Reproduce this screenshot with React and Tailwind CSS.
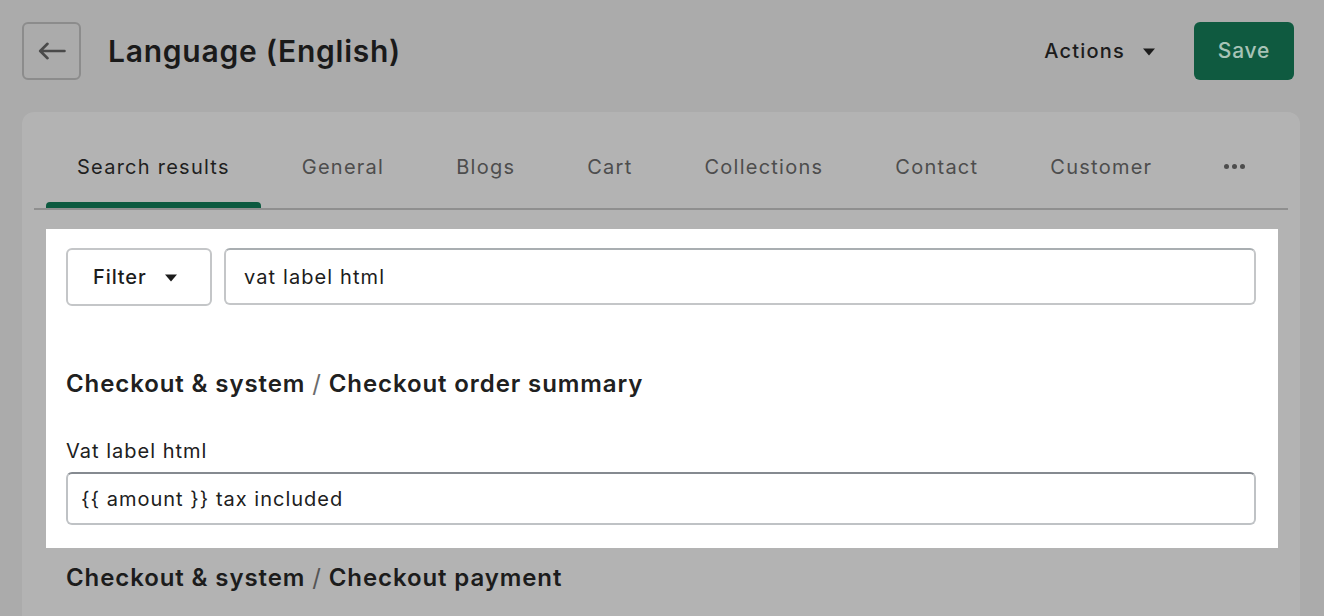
const tabs = ['Search results', 'General', 'Blogs', 'Cart', 'Collections', 'Contact', 'Customer']

/** 작은 아래쪽 삼각형 */
function Caret({ className = '' }) {
  return (
    <svg className={className} width="14" height="8" viewBox="0 0 14 8">
      <path d="M1 0.5h12L7 7.5z" fill="currentColor" />
    </svg>
  )
}

export default function App() {
  return (
    <div className="min-h-[616px] h-[616px] overflow-hidden bg-[#ababab] font-['Inter','Liberation_Sans',sans-serif] text-[#1c1c1c]">
      {/* 상단 헤더 */}
      <header className="flex items-center pl-[22px] pr-[30px] pt-[22px] h-[80px]">
        <button className="w-[59px] h-[58px] rounded-[6px] border-2 border-[#8c8c8c] flex items-center justify-center text-[#4a4a4a]">
          <svg width="28" height="18" viewBox="0 0 28 18" fill="none" stroke="currentColor" strokeWidth="2.6" strokeLinecap="round" strokeLinejoin="round">
            <path d="M26.5 9H2.5M9.5 1.8L2.2 9l7.3 7.2" />
          </svg>
        </button>
        <h1 className="ml-[27px] text-[30px] font-semibold tracking-[0.75px] text-[#1a1a1a]">Language (English)</h1>
        <div className="ml-auto flex items-center">
          <button className="flex items-center gap-[17px] text-[20px] font-medium tracking-[1.2px] text-[#1c1c1c] mr-[38px]">
            Actions
            <Caret className="text-[#1c1c1c] mt-[2px]" />
          </button>
          <button className="w-[100px] h-[58px] rounded-[6px] bg-[#0f5a40] text-[#a7c3b7] text-[21px] font-medium tracking-[0.8px]">
            Save
          </button>
        </div>
      </header>

      {/* 카드 */}
      <div className="mt-[32px] ml-[22px] mr-[24px] bg-[#b3b3b3] rounded-t-[12px] h-[600px]">
        {/* 탭 */}
        <div className="mx-[12px] pt-[30px] border-b-2 border-[#8f8f8f] flex items-end">
          <div className="flex ml-[7px]">
            {tabs.map((t, i) => (
              <div key={t} className="relative px-[36px] h-[66px] flex items-start pt-[10px]">
                <span className={`text-[20px] tracking-[1.25px] ${i === 0 ? 'text-[#1f1f1f]' : 'text-[#4d4d4d]'}`}>{t}</span>
                {i === 0 && (
                  <div className="absolute left-[5px] right-[5px] bottom-0 h-[6px] rounded-t-[4px] bg-[#0d5a40]" />
                )}
              </div>
            ))}
            <div className="px-[36px] h-[66px] flex items-start pt-[22px] gap-[3px]">
              <span className="w-[5px] h-[5px] rounded-full bg-[#4d4d4d]" />
              <span className="w-[5px] h-[5px] rounded-full bg-[#4d4d4d]" />
              <span className="w-[5px] h-[5px] rounded-full bg-[#4d4d4d]" />
            </div>
          </div>
        </div>

        {/* 강조된 흰색 영역 */}
        <div className="mt-[19px] ml-[24px] mr-[22px] bg-white pl-[20px] pr-[22px] pt-[19px] pb-[23px]">
          <div className="flex gap-[12px]">
            <button className="w-[146px] h-[58px] shrink-0 rounded-[6px] border-2 border-[#c4c6c8] flex items-center pl-[25px] gap-[17px] text-[20px] font-medium tracking-[0.9px] text-[#1c1c1c]">
              Filter
              <Caret className="text-[#1c1c1c] mt-[2px]" />
            </button>
            <div className="flex-1 h-[57px] rounded-[6px] border-2 border-[#c4c6c8] border-t-[#a9aeb1] flex items-center pl-[18px] text-[20px] tracking-[1.1px] text-[#1c1c1c]">
              vat label html
            </div>
          </div>

          <h2 className="mt-[62px] text-[24px] font-semibold tracking-[0.9px] text-[#202020] leading-[32px]">
            Checkout &amp; system <span className="text-[#6b6b6b] font-normal">/</span> Checkout order summary
          </h2>

          <div className="mt-[38px] text-[20px] tracking-[1px] text-[#202020] leading-[26px]">Vat label html</div>
          <div className="mt-[8px] h-[53px] rounded-[6px] border-2 border-[#bfc2c5] border-t-[#858a90] flex items-center pl-[13px] text-[20px] tracking-[1px] text-[#202020]">
            {'{{ amount }} tax included'}
          </div>
        </div>

        <h2 className="mt-[14px] ml-[44px] text-[24px] font-semibold tracking-[0.9px] text-[#1c1c1c] leading-[32px]">
          Checkout &amp; system <span className="text-[#555] font-normal">/</span> Checkout payment
        </h2>
      </div>
    </div>
  )
}
